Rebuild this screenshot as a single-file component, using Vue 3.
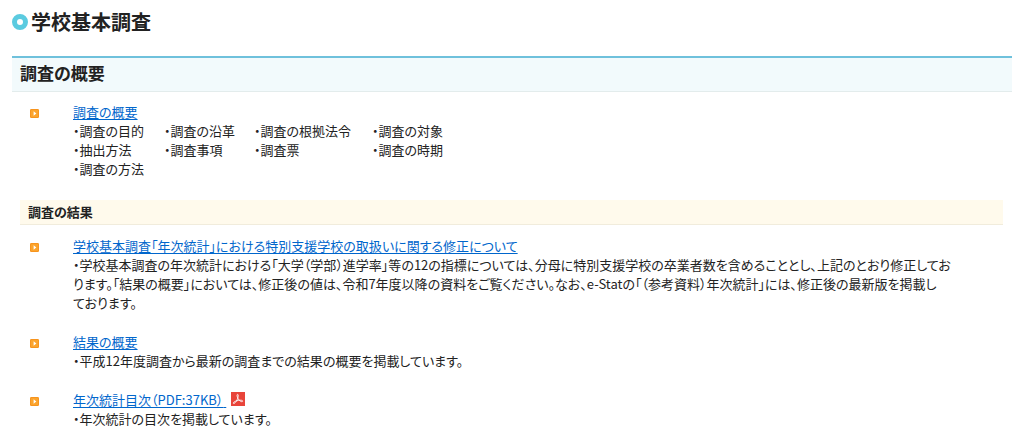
<script setup>
const topics = [
  '・調査の目的', '・調査の沿革', '・調査の根拠法令', '・調査の対象',
  '・抽出方法', '・調査事項', '・調査票', '・調査の時期',
  '・調査の方法',
]
const results = [
  {
    title: '学校基本調査「年次統計」における特別支援学校の取扱いに関する修正について',
    text: '・学校基本調査の年次統計における「大学（学部）進学率」等の12の指標については、分母に特別支援学校の卒業者数を含めることとし、上記のとおり修正してお\nります。「結果の概要」においては、修正後の値は、令和7年度以降の資料をご覧ください。なお、e-Statの「（参考資料）年次統計」には、修正後の最新版を掲載し\nております。',
  },
  {
    title: '結果の概要',
    text: '・平成12年度調査から最新の調査までの結果の概要を掲載しています。',
  },
  {
    title: '年次統計目次（PDF:37KB）',
    text: '・年次統計の目次を掲載しています。',
    pdf: true,
  },
]
</script>

<template>
  <main class="page">
    <h1 class="title">
      <svg class="ring" viewBox="0 0 16 16" aria-hidden="true">
        <circle cx="8" cy="8" r="5.5" fill="#fff" stroke="#5bcbe0" stroke-width="5" />
      </svg>
      学校基本調査
    </h1>

    <h2 class="section">調査の概要</h2>
    <div class="entry">
      <svg class="marker" viewBox="0 0 10 10" aria-hidden="true">
        <rect width="10" height="10" rx="1.5" fill="#f7941d" />
        <rect x="1" y="1" width="8" height="8" rx="1" fill="#fba42e" />
        <path d="M4 2.5 7 5 4 7.5z" fill="#fff" />
      </svg>
      <div class="body">
        <a class="link" href="#">調査の概要</a>
        <ul class="topics">
          <li v-for="topic in topics" :key="topic">{{ topic }}</li>
        </ul>
      </div>
    </div>

    <h3 class="subsection">調査の結果</h3>
    <div v-for="item in results" :key="item.title" class="entry">
      <svg class="marker" viewBox="0 0 10 10" aria-hidden="true">
        <rect width="10" height="10" rx="1.5" fill="#f7941d" />
        <rect x="1" y="1" width="8" height="8" rx="1" fill="#fba42e" />
        <path d="M4 2.5 7 5 4 7.5z" fill="#fff" />
      </svg>
      <div class="body">
        <a class="link" href="#">{{ item.title }}<template v-if="item.pdf">&nbsp;<svg class="pdf" viewBox="0 0 14 14" role="img" aria-label="PDF">
          <rect width="14" height="14" fill="#e8443a" />
          <path d="M6.6 2.4c.9 0 .8 1.5.2 3.7C6.1 8.300 4.300 11.200 2.900 11.500c-1.300.1-.6-1.500 1.400-2.200 2-.8 4.500-1.300 6.300-1 1.500.3 1.300 1.500.1 1.400C9 9.400 7.100 7.300 6.400 5.200 5.900 3.600 5.900 2.400 6.600 2.400z" fill="none" stroke="#fff" stroke-width=".9" />
        </svg></template></a>
        <p class="text">{{ item.text }}</p>
      </div>
    </div>
  </main>
</template>

<style>
body {
  margin: 0;
  background: #fff;
}
</style>

<style scoped>
.page {
  padding: 10px 12px 0;
  color: #222;
  font-family: "Noto Sans CJK JP", sans-serif;
  font-size: 13px;
  line-height: 19px;
  font-feature-settings: "palt";
}

.title {
  display: flex;
  align-items: center;
  gap: 3px;
  margin: 0 0 22px;
  font-size: 20px;
  line-height: 24px;
  font-weight: 700;
}

.ring {
  width: 16px;
  height: 16px;
}

.section {
  margin: 0 0 11px;
  padding: 0 8px 3px;
  border-top: 2px solid #6fc1dc;
  border-bottom: 1px solid #e3ecec;
  background: #f2fafc;
  font-size: 17px;
  line-height: 30px;
  font-weight: 700;
}

.subsection {
  margin: 22px 9px 12px 8px;
  padding: 0 8px;
  border-bottom: 1px solid #f1ecdc;
  background: #fffaec;
  font-size: 13px;
  line-height: 24px;
  font-weight: 700;
}

.entry {
  display: flex;
  align-items: flex-start;
  gap: 34px;
  margin: 0 46px 21px 18px;
}

.marker {
  flex: none;
  width: 9px;
  height: 9px;
  margin-top: 6px;
}

.body {
  flex: 1;
  min-width: 0;
}

.link {
  display: block;
  width: fit-content;
  color: #0066cc;
  line-height: 18px;
  text-decoration: underline;
  text-underline-offset: 2px;
}

.pdf {
  width: 14px;
  height: 14px;
  margin-left: 5px;
  vertical-align: -1px;
}

.topics {
  display: grid;
  grid-template-columns: 91px 90px 118px auto;
  margin: 0;
  padding: 0;
  list-style: none;
}

.text {
  margin: 0;
  white-space: pre-line;
}
</style>
